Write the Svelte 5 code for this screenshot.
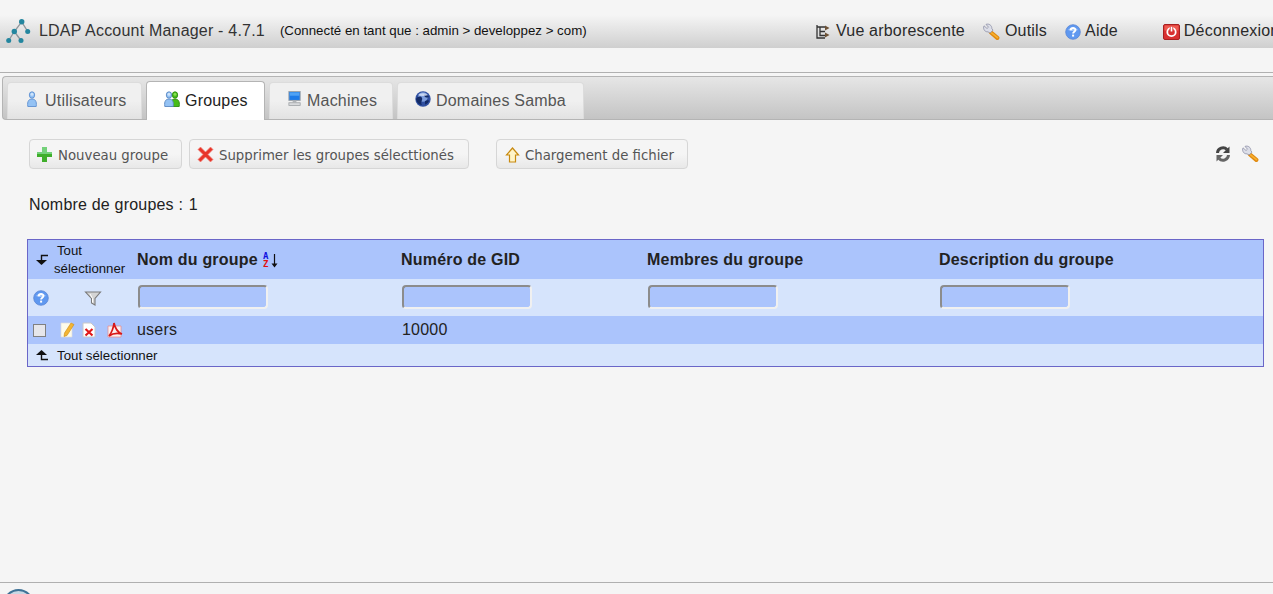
<script>
  const tabs = [
    { label: 'Utilisateurs', icon: 'user', active: false },
    { label: 'Groupes', icon: 'group', active: true },
    { label: 'Machines', icon: 'host', active: false },
    { label: 'Domaines Samba', icon: 'globe', active: false }
  ];
  const columns = ['Numéro de GID', 'Membres du groupe', 'Description du groupe'];
</script>

{#snippet wrench(cls)}
  <svg class={cls} viewBox="0 0 18 18">
    <path d="M9 9.500 L15.300 14.800" stroke="#e08a10" stroke-width="4.200" stroke-linecap="round"/>
    <path d="M9.500 9.800 L15.500 14.600" stroke="#f8b030" stroke-width="1.600" stroke-linecap="round"/>
    <path d="M2 2.800 L5 5.500 L6.500 4.200 L4 1.400 C7 .2 10 2.500 9.800 5.500 L11 7.200 L8 10 L6 8.800 C3 9.300 .6 6 2 2.800Z" fill="#dcdee8" stroke="#8f92a8" stroke-width=".8"/>
  </svg>
{/snippet}

{#snippet help(cls)}
  <svg class={cls} viewBox="0 0 16 16">
    <circle cx="8" cy="8" r="7.300" fill="#5f98f0" stroke="#5a86d4" stroke-width=".8"/>
    <path d="M3 6a5.500 4 0 0 1 10 0a9 5 0 0 1-10 0" fill="#a4c6f8"/>
    <path d="M5.700 6.200C5.800 3.400 10.400 3.300 10.400 6C10.400 7.700 8.100 7.800 8.100 9.600" fill="none" stroke="#fff" stroke-width="1.900"/>
    <rect x="7.100" y="10.600" width="2" height="2" fill="#fff"/>
  </svg>
{/snippet}

{#snippet person(x, body, dark, light)}
  <path d="M{x - 4.2} 15.500 C{x - 5} 10 {x - 3} 8 {x} 8 C{x + 3} 8 {x + 5} 10 {x + 4.2} 15.500Z" fill={body} stroke={dark} stroke-width=".9"/>
  <ellipse cx={x} cy="4" rx="2.700" ry="3.200" fill={body} stroke={dark} stroke-width=".9"/>
  <ellipse cx={x} cy="3.200" rx="1.400" ry="1.500" fill={light}/>
{/snippet}

{#snippet tabIcon(name)}
  {#if name === 'user'}
    <svg class="ico16" viewBox="0 0 16 16">{@render person(7, '#94c2f4', '#5f90d0', '#cfe4fa')}</svg>
  {:else if name === 'group'}
    <svg class="ico16" viewBox="0 0 16 16">
      {@render person(11, '#46bc18', '#2f8c12', '#86e050')}
      {@render person(5, '#94c2f4', '#5a88c2', '#cfe4fa')}
    </svg>
  {:else if name === 'host'}
    <svg class="ico16" viewBox="0 0 16 17">
      <rect x="1.500" y=".5" width="12" height="9.500" fill="#1d7be8" stroke="#a0a4a8"/>
      <rect x="2.500" y="1.500" width="10" height="3.500" fill="#4fa2f5"/>
      <rect x="5.500" y="10" width="4" height="2" fill="#b0b4b8"/>
      <rect x="1.500" y="12.500" width="12" height="3" fill="#d8dadc" stroke="#9a9ea2" stroke-width=".8"/>
    </svg>
  {:else}
    <svg class="ico16" viewBox="0 0 16 16">
      <circle cx="8" cy="8" r="7.700" fill="#2f4fa0"/>
      <circle cx="8" cy="6" r="4.800" fill="#7d9ddc"/>
      <path d="M1 8C3 5 6 5 7 7S5 11 7 14C4 14 1.500 11 1 8ZM9 4C11 3 13 4 14 6C12 7 10 7 9 4ZM10 10C12 9 14 9 14 10C13 12 12 13 10 13.500Z" fill="#132a66"/>
      <path d="M3 4a6 4 0 0 1 10 0a6 2 0 0 1-10 0" fill="#dfe8f8" opacity=".75"/>
    </svg>
  {/if}
{/snippet}

<div class="page">
  <header class="header">
    <div class="brand">
      <svg class="logo" viewBox="0 0 26 26">
        <path d="M16.700 2.800 L9.300 12.500 L3.700 21.500 M9.300 12.500 L16 21.500 M16.700 2.800 L22.700 12.500" fill="none" stroke="#8f959a" stroke-width="1.300"/>
        <g fill="#23869f">
          <circle cx="16.700" cy="2.800" r="2.700"/><circle cx="9.300" cy="12.500" r="2.700"/><circle cx="22.700" cy="12.500" r="2.500"/>
          <circle cx="3.700" cy="21.500" r="2.500"/><circle cx="16" cy="21.500" r="2.500"/>
        </g>
      </svg>
      <span class="title">LDAP Account Manager - 4.7.1</span>
      <span class="conn">(Connecté en tant que : admin &gt; developpez &gt; com)</span>
    </div>
    <nav class="topnav">
      <span class="nav-item tree">
        <svg class="ico14" viewBox="0 0 15 15">
          <path d="M2 1V14H10M2 3H10M5 7.500H10M5 3V11.500H10" fill="none" stroke="#333" stroke-width="1.300"/>
          <path d="M10 1.500L14.500 4L10 6.500ZM10 8.500L14.500 11L10 13.500Z" fill="#6e5236"/>
        </svg>Vue arborescente
      </span>
      <span class="nav-item tools">{@render wrench('ico18')}Outils</span>
      <span class="nav-item aide">{@render help('ico16')}Aide</span>
      <span class="nav-item logout">
        <svg class="ico17h" viewBox="0 0 17 16">
          <rect x=".5" y=".5" width="16" height="15" rx="1.500" fill="#d83030" stroke="#a82020"/>
          <rect x="1.500" y="1.500" width="14" height="5" fill="#ee5a50"/>
          <circle cx="8.500" cy="8" r="4.200" fill="none" stroke="#fff" stroke-width="1.800"/>
          <path d="M8.500 2.800V7.500" stroke="#d83030" stroke-width="3.500"/>
          <path d="M8.500 2.800V7.500" stroke="#fff" stroke-width="1.700"/>
        </svg>Déconnexion
      </span>
    </nav>
  </header>

  <div class="rule"></div>

  <div class="tabbar">
    {#each tabs as tab}
      <div class="tab tab-{tab.icon}" class:active={tab.active}>
        {@render tabIcon(tab.icon)}<span>{tab.label}</span>
      </div>
    {/each}
  </div>

  <main class="content">
    <div class="toolbar">
      <div class="btn new">
        <svg class="ico17" viewBox="0 0 17 17">
          <path d="M6 1H11V6H16V11H11V16H6V11H1V6H6Z" fill="#3fae2a"/>
          <path d="M6 1H11V6H16V8H1V6H6Z" fill="#74d17a"/>
        </svg>Nouveau groupe
      </div>
      <div class="btn del">
        <svg class="ico17" viewBox="0 0 17 17">
          <path d="M3.500 1 L8.500 6 L13.500 1 L16 3.500 L11 8.500 L16 13.500 L13.500 16 L8.500 11 L3.500 16 L1 13.500 L6 8.500 L1 3.500Z" fill="#e8352a" stroke="#f08a80" stroke-width=".7"/>
        </svg>Supprimer les groupes sélecttionés
      </div>
      <div class="btn up">
        <svg class="ico15" viewBox="0 0 15 16">
          <path d="M7.500 1 L13.500 8 H10.500 V15 H4.500 V8 H1.500Z" fill="#fff4c8" stroke="#c88a10" stroke-width="1.200"/>
        </svg>Chargement de fichier
      </div>
      <div class="tool-icons">
        <svg class="ico16" viewBox="0 0 16 16">
          <path d="M2.500 7A5.500 5.500 0 0 1 12 3.500" fill="none" stroke="#444" stroke-width="3"/>
          <path d="M14.500 .5V7H8Z" fill="#444"/>
          <path d="M13.500 9A5.500 5.500 0 0 1 4 12.500" fill="none" stroke="#666" stroke-width="3"/>
          <path d="M1.500 15.500V9H8Z" fill="#666"/>
        </svg>
        {@render wrench('ico18')}
      </div>
    </div>

    <p class="count">Nombre de groupes : <span>1</span></p>

    <table class="list">
      <colgroup>
        <col class="c1" /><col class="c2" /><col class="c3" /><col class="c4" /><col />
      </colgroup>
      <thead>
        <tr class="head">
          <th class="select-all">
            <div class="sel-wrap">
              <svg class="arrow" viewBox="0 0 14 12">
                <path d="M13 1.500H6.500V7" fill="none" stroke="#111" stroke-width="1.400"/>
                <path d="M1 6H12L6.500 11Z" fill="#111"/>
              </svg>
              <span class="sel-text"><span class="tout">Tout</span><br />sélectionner</span>
            </div>
          </th>
          <th>Nom du groupe
            <svg class="sort" viewBox="0 0 16 16">
              <text x="0" y="7" class="az a">A</text>
              <text x="0" y="15" class="az z">Z</text>
              <path d="M11.500 2V13" stroke="#111" stroke-width="1.200"/>
              <path d="M8.500 11.500H14.500L11.500 15.500Z" fill="#111"/>
            </svg>
          </th>
          {#each columns as c}<th>{c}</th>{/each}
        </tr>
        <tr class="filter">
          <td class="filter-tools">
            {@render help('ico16')}
            <svg class="funnel" viewBox="0 0 18 18">
              <path d="M1.500 3H16.500L11 9.500V16L7.500 14V9.500Z" fill="#d4d4d4" stroke="#7a7a7a" stroke-width="1.100"/>
              <path d="M6 5L8.500 9.500V13.500" fill="none" stroke="#fff"/>
            </svg>
          </td>
          {#each Array(4) as _}<td><div class="field"></div></td>{/each}
        </tr>
      </thead>
      <tbody>
        <tr class="row">
          <td class="row-tools">
            <span class="check"></span>
            <svg class="edit" viewBox="0 0 16 16">
              <path d="M1 1H12V15H1Z" fill="#fdfbea" stroke="#ddd" stroke-width=".7"/>
              <path d="M11 1 L14 2.500 L7 13.500 L4 14.500 L4.500 11Z" fill="#f3b534" stroke="#c98a10" stroke-width=".6"/>
            </svg>
            <svg class="del-ico" viewBox="0 0 14 16">
              <path d="M1 1H9L13 5V15H1Z" fill="#fff" stroke="#c8c8c8"/>
              <path d="M3.500 7L10.500 13.500M10.500 7L3.500 13.500" stroke="#e01818" stroke-width="2.200"/>
            </svg>
            <svg class="pdf" viewBox="0 0 16 16">
              <path d="M1 4H14V15H1Z" fill="#fbeeee" stroke="#e89090" stroke-width=".8"/>
              <path d="M7 1C8 6 10 10 15 12C11 11 6 11 2 14C5 10 6.500 6 7 1Z" fill="none" stroke="#d81818" stroke-width="1.700"/>
            </svg>
          </td>
          <td>users</td><td class="gid">10000</td><td></td><td></td>
        </tr>
        <tr class="foot">
          <td colspan="5">
            <div class="sel-wrap foot-wrap">
              <svg class="arrow" viewBox="0 0 14 12">
                <path d="M1 6H12L6.500 1Z" fill="#111"/>
                <path d="M6.500 5V10.500H13" fill="none" stroke="#111" stroke-width="1.400"/>
              </svg>
              <span>Tout sélectionner</span>
            </div>
          </td>
        </tr>
      </tbody>
    </table>
  </main>

  <footer class="footer"><span class="orb"></span></footer>
</div>

<style>
  :global(body) {
    margin: 0;
    background: #f5f5f5;
    overflow: hidden;
  }
  .page {
    width: 1273px;
    height: 594px;
    overflow: hidden;
    display: flex;
    flex-direction: column;
    font-family: "Liberation Sans", Arial, sans-serif;
    color: #222;
  }
  svg { display: block; flex: none; }
  .ico14 { width: 15px; height: 15px; }
  .ico15 { width: 15px; height: 16px; }
  .ico16 { width: 16px; height: 16px; }
  .ico17 { width: 17px; height: 17px; }
  .ico17h { width: 17px; height: 16px; }
  .ico18 { width: 18px; height: 18px; }

  .header {
    margin-top: 15px;
    height: 33px;
    flex: none;
    box-sizing: border-box;
    padding-bottom: 2px;
    display: flex;
    align-items: center;
    justify-content: space-between;
    background: linear-gradient(#f5f5f5, #cfcfcf);
    font-size: 16px;
    letter-spacing: 0.2px;
    white-space: nowrap;
  }
  .brand { display: flex; align-items: center; padding-left: 5px; }
  .logo { width: 26px; height: 26px; margin: 2px 8px 0 0; }
  .title { color: #333; }
  .conn { margin-left: 15px; font-size: 13.3px; letter-spacing: 0; color: #111; }
  .topnav { display: flex; align-items: center; width: 458px; flex: none; }
  .nav-item { display: flex; align-items: center; color: #2a2a2a; }
  .nav-item svg { margin-top: 2px; }
  .tree { gap: 6px; }
  .tools { margin-left: 17px; gap: 5px; }
  .aide { margin-left: 18px; gap: 4px; }
  .logout { margin-left: 45px; gap: 4px; }

  .rule {
    margin-top: 24px;
    height: 1px;
    flex: none;
    background: #b0b0b0;
  }
  .tabbar {
    margin: 3px 0 0 2px;
    height: 44px;
    flex: none;
    box-sizing: border-box;
    display: flex;
    align-items: flex-end;
    gap: 4px;
    padding-left: 4px;
    border: 1px solid #b4b4b4;
    border-right: 0;
    border-radius: 4px 0 0 4px;
    background: linear-gradient(#e6e6e6, #c4c4c4);
  }
  .tab {
    height: 37px;
    box-sizing: border-box;
    display: flex;
    align-items: center;
    font-size: 16px;
    letter-spacing: 0.2px;
    color: #555;
    border: 1px solid #dcdcdc;
    border-bottom: 0;
    border-radius: 4px 4px 0 0;
    background: linear-gradient(#f0f0f0 50%, #e2e2e2);
  }
  .tab-user { width: 135px; padding-left: 17px; gap: 4px; }
  .tab-group { width: 119px; padding-left: 17px; gap: 5px; }
  .tab-host { width: 124px; padding-left: 17px; gap: 4px; }
  .tab-globe { width: 187px; padding-left: 17px; gap: 5px; }
  .tab svg { margin-top: -5px; }
  .tab.active {
    height: 39px;
    margin-bottom: -1px;
    color: #222;
    background: #fff;
    border-color: #b4b4b4;
  }

  .content { flex: 1; padding: 19px 9px 0 27px; }
  .toolbar { display: flex; align-items: center; height: 30px; padding-left: 2px; }
  .btn {
    height: 30px;
    box-sizing: border-box;
    padding-top: 3px;
    display: flex;
    align-items: center;
    font-family: "DejaVu Sans", Verdana, sans-serif;
    font-size: 13.3px;
    color: #555;
    white-space: nowrap;
    border: 1px solid #d6d6d6;
    border-radius: 4px;
    background: linear-gradient(#f5f5f5 50%, #e8e8e8);
  }
  .btn svg { margin-top: -2px; }
  .new { width: 153px; padding-left: 6px; gap: 5px; }
  .del { width: 280px; margin-left: 7px; padding-left: 7px; gap: 5px; }
  .up { width: 192px; margin-left: 27px; padding-left: 8px; gap: 5px; }
  .tool-icons { margin-left: auto; margin-right: 5px; display: flex; align-items: center; gap: 10px; }

  .count { margin: 26px 0 0 2px; height: 20px; font-size: 16px; line-height: 20px; letter-spacing: 0.2px; color: #222; }
  .count span { margin-left: 1px; }

  .list {
    margin-top: 24px;
    width: 1237px;
    table-layout: fixed;
    border-collapse: separate;
    border-spacing: 0;
    border: 1px solid #6a66c8;
    font-size: 16px;
    letter-spacing: 0.2px;
    color: #222;
  }
  .c1 { width: 105px; }
  .c2 { width: 264px; }
  .c3 { width: 246px; }
  .c4 { width: 292px; }
  .list th, .list td { padding: 0 0 0 4px; text-align: left; }
  .head { height: 39px; background: #abc4fc; }
  .head th { font-size: 16px; font-weight: bold; white-space: nowrap; }
  .sort { display: inline-block; width: 16px; height: 16px; margin-left: 1px; vertical-align: -3px; }
  .az { font: bold 9px "DejaVu Sans Mono", monospace; letter-spacing: 0; }
  .a { fill: #1010e0; }
  .z { fill: #e01010; }
  .list th.select-all { padding: 1px 0 0; font-weight: normal; font-size: 13.2px; letter-spacing: 0; }
  .sel-wrap { display: flex; align-items: center; color: #111; }
  .arrow { width: 14px; height: 12px; margin-left: 7px; }
  .sel-text { text-align: left; line-height: 18px; margin-left: 5px; white-space: nowrap; }
  .tout { margin-left: 3px; }
  .filter { height: 37px; background: #d6e4fc; }
  .list td.filter-tools { padding: 0 0 0 5px; }
  .filter-tools :global(svg) { display: inline-block; vertical-align: middle; }
  .funnel { width: 18px; height: 18px; margin-left: 30px; }
  .field {
    width: 130px;
    height: 24px;
    box-sizing: border-box;
    border: 2px solid #8c8c8c;
    border-right-color: #f0f0f0;
    border-bottom-color: #f0f0f0;
    border-radius: 4px;
    background: #abc4fc;
    margin: -1px 0 0 1px;
  }
  .row { height: 28px; background: #abc4fc; }
  .list td.row-tools { padding: 0; }
  .list td.gid { padding-left: 5px; }
  .row-tools { font-size: 0; }
  .row-tools > * { display: inline-block; vertical-align: middle; }
  .check {
    width: 13px;
    height: 13px;
    box-sizing: border-box;
    margin-left: 5px;
    border: 1px solid #808080;
    background: #e6e6ea;
  }
  .edit { width: 16px; height: 16px; margin-left: 14px; }
  .del-ico { width: 14px; height: 16px; margin-left: 6px; }
  .pdf { width: 16px; height: 16px; margin-left: 10px; }
  .foot { height: 22px; background: #d6e4fc; }
  .list .foot td { padding: 0; font-size: 13.3px; letter-spacing: 0; }
  .foot-wrap span { margin-left: 8px; }

  .footer {
    height: 11px;
    flex: none;
    border-top: 1px solid #b0b0b0;
    position: relative;
    overflow: hidden;
  }
  .orb {
    position: absolute;
    left: 3px;
    top: 6px;
    width: 27px;
    height: 27px;
    border-radius: 50%;
    border: 2px solid #3f7296;
    background: #c8d8e4;
  }
</style>
